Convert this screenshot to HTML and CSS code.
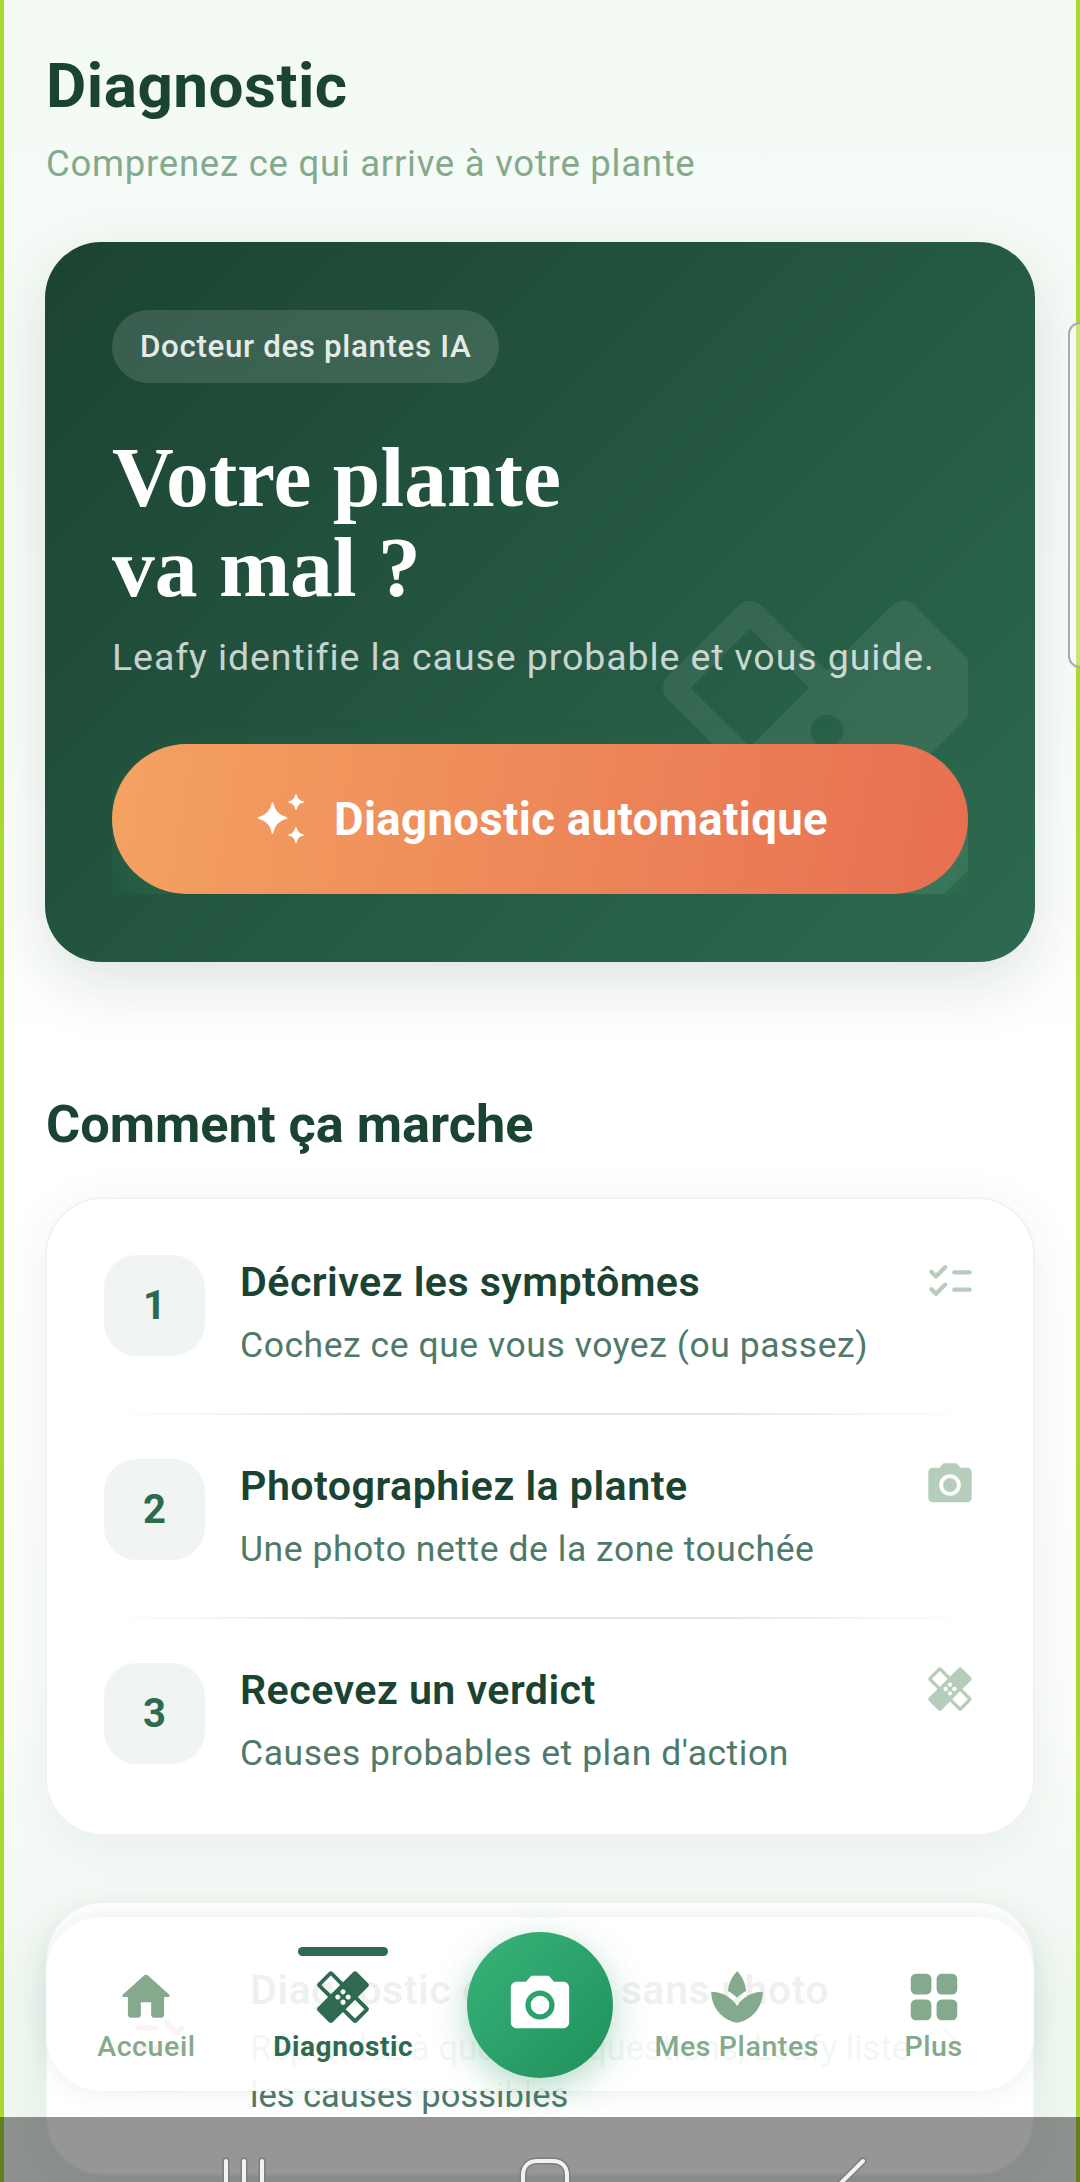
FILE: index.html
```html
<!DOCTYPE html>
<html lang="fr">
<head>
<meta charset="utf-8">
<title>Diagnostic</title>
<link rel="stylesheet" href="styles.css">
</head>
<body>
<svg class="defs" aria-hidden="true">
  <symbol id="i-healing" viewBox="0 0 24 24"><path d="M17.73 12.02l3.98-3.98c.39-.39.39-1.02 0-1.41l-4.34-4.34c-.39-.39-1.02-.39-1.41 0l-3.98 3.98L8 2.29C7.8 2.1 7.55 2 7.29 2c-.25 0-.51.1-.7.29L2.25 6.63c-.39.39-.39 1.02 0 1.41l3.98 3.98L2.25 16c-.39.39-.39 1.02 0 1.41l4.34 4.34c.39.39 1.02.39 1.41 0l3.98-3.98 3.98 3.98c.2.2.45.29.71.29.26 0 .51-.1.71-.29l4.34-4.34c.39-.39.39-1.02 0-1.41l-3.99-3.98zM12 9c.55 0 1 .45 1 1s-.45 1-1 1-1-.45-1-1 .45-1 1-1zm-4.71 1.96L3.66 7.34l3.63-3.63 3.62 3.62-3.62 3.63zM10 13c-.55 0-1-.45-1-1s.45-1 1-1 1 .45 1 1-.45 1-1 1zm2 2c-.55 0-1-.45-1-1s.45-1 1-1 1 .45 1 1-.45 1-1 1zm2-4c.55 0 1 .45 1 1s-.45 1-1 1-1-.45-1-1 .45-1 1-1zm2.66 9.34l-3.63-3.62 3.63-3.63 3.62 3.62-3.62 3.63z"/></symbol>
  <symbol id="i-camera" viewBox="0 0 24 24"><circle cx="12" cy="12" r="3.2"/><path d="M9 2 7.17 4H4c-1.1 0-2 .9-2 2v12c0 1.1.9 2 2 2h16c1.1 0 2-.9 2-2V6c0-1.1-.9-2-2-2h-3.17L15 2H9zm3 15c-2.76 0-5-2.24-5-5s2.24-5 5-5 5 2.24 5 5-2.24 5-5 5z"/></symbol>
  <symbol id="i-checklist" viewBox="0 0 24 24"><rect x="13" y="7" width="9" height="2" rx="1"/><rect x="13" y="15" width="9" height="2" rx="1"/><path d="M5.540 10.900c-.26 0-.51-.1-.71-.29L2.700 8.480c-.39-.39-.39-1.020 0-1.410s1.020-.39 1.410 0l1.430 1.420 3.530-3.540c.39-.39 1.020-.39 1.410 0s.39 1.020 0 1.410l-4.230 4.250c-.2.190-.45.290-.71.290zM5.540 18.900c-.26 0-.51-.1-.71-.29L2.700 16.480c-.39-.39-.39-1.020 0-1.410s1.020-.39 1.410 0l1.430 1.420 3.530-3.540c.39-.39 1.020-.39 1.410 0s.39 1.020 0 1.410l-4.230 4.250c-.2.190-.45.290-.71.290z"/></symbol>
  <symbol id="i-home" viewBox="0 0 24 24"><path d="M10 19v-5h4v5c0 .55.45 1 1 1h3c.55 0 1-.45 1-1v-7h1.700c.46 0 .68-.57.33-.87L12.670 3.600c-.38-.34-.96-.34-1.340 0l-8.360 7.530c-.34.3-.13.87.33.87H5v7c0 .55.45 1 1 1h3c.55 0 1-.45 1-1z"/></symbol>
  <symbol id="i-spa" viewBox="0 0 24 24"><path d="M15.490 9.630c-.18-2.790-1.310-5.510-3.430-7.630-2.140 2.140-3.320 4.860-3.550 7.630 1.280.68 2.460 1.560 3.490 2.630 1.030-1.060 2.210-1.940 3.490-2.630zM12 15.450C9.850 12.170 6.180 10 2 10c0 5.320 3.360 9.820 8.030 11.490.63.23 1.290.4 1.970.51.68-.12 1.330-.29 1.970-.51C18.640 19.820 22 15.320 22 10c-4.180 0-7.850 2.170-10 5.450z"/></symbol>
  <symbol id="i-grid" viewBox="0 0 24 24"><rect x="3" y="3" width="8" height="8" rx="2"/><rect x="13" y="3" width="8" height="8" rx="2"/><rect x="3" y="13" width="8" height="8" rx="2"/><rect x="13" y="13" width="8" height="8" rx="2"/></symbol>
</svg>

<div class="screen">
  <main class="page">
    <header class="head">
      <h1 class="head-title">Diagnostic</h1>
      <p class="head-sub">Comprenez ce qui arrive à votre plante</p>
    </header>

    <section class="hero">
      <div class="hero-inner">
        <svg class="hero-mark"><use href="#i-healing"/></svg>
        <span class="pill">Docteur des plantes IA</span>
        <h2 class="hero-title">Votre plante<br>va mal ?</h2>
        <p class="hero-sub">Leafy identifie la cause probable et vous guide.</p>
        <button class="cta" type="button">
          <svg class="cta-icon" viewBox="0 0 48 50"><path d="M15.500 9c1.400 8 6 13 14 15-8 2-12.600 7-14 15-1.400-8-6-13-14-15 8-2 12.600-7 14-15z"/><path d="M39 1c.7 4 3 6.300 7 7-4 .7-6.300 3-7 7-.7-4-3-6.300-7-7 4-.7 6.300-3 7-7z"/><path d="M39 34c.7 4 3 6.300 7 7-4 .7-6.300 3-7 7-.7-4-3-6.300-7-7 4-.7 6.300-3 7-7z"/></svg>
          <span>Diagnostic automatique</span>
        </button>
      </div>
    </section>

    <h2 class="section-title">Comment ça marche</h2>

    <section class="card steps">
      <div class="step">
        <div class="step-num">1</div>
        <div class="step-text">
          <h3 class="step-title">Décrivez les symptômes</h3>
          <p class="step-sub">Cochez ce que vous voyez (ou passez)</p>
        </div>
        <svg class="step-icon"><use href="#i-checklist"/></svg>
      </div>
      <div class="divider"></div>
      <div class="step">
        <div class="step-num">2</div>
        <div class="step-text">
          <h3 class="step-title">Photographiez la plante</h3>
          <p class="step-sub">Une photo nette de la zone touchée</p>
        </div>
        <svg class="step-icon"><use href="#i-camera"/></svg>
      </div>
      <div class="divider"></div>
      <div class="step">
        <div class="step-num">3</div>
        <div class="step-text">
          <h3 class="step-title">Recevez un verdict</h3>
          <p class="step-sub">Causes probables et plan d'action</p>
        </div>
        <svg class="step-icon"><use href="#i-healing"/></svg>
      </div>
    </section>

    <section class="card manual">
      <div class="manual-icon"><svg class="manual-glyph"><use href="#i-checklist"/></svg></div>
      <div class="manual-text">
        <h3 class="step-title">Diagnostic express sans photo</h3>
        <p class="manual-sub">Répondez à quelques questions, Leafy liste les causes possibles</p>
      </div>
      <svg class="manual-chevron" viewBox="0 0 15 30"><path d="M2 2l11 13L2 28"/></svg>
    </section>
  </main>

  <nav class="nav">
    <a class="nav-item"><svg class="nav-icon"><use href="#i-home"/></svg><span>Accueil</span></a>
    <a class="nav-item is-active"><i class="nav-bar"></i><svg class="nav-icon"><use href="#i-healing"/></svg><span>Diagnostic</span></a>
    <a class="nav-item nav-spacer"></a>
    <a class="nav-item"><svg class="nav-icon"><use href="#i-spa"/></svg><span>Mes Plantes</span></a>
    <a class="nav-item"><svg class="nav-icon"><use href="#i-grid"/></svg><span>Plus</span></a>
  </nav>
  <button class="fab" type="button"><svg class="fab-icon"><use href="#i-camera"/></svg></button>

  <i class="edge edge-left"></i>
  <i class="edge edge-right"></i>
  <i class="edge-handle"></i>

  <div class="sysbar">
    <svg class="sys-icon" viewBox="0 0 52 30"><path class="sys-o" d="M8 4v30M26 4v30M44 4v30"/><path class="sys-w" d="M8 4v30M26 4v30M44 4v30"/></svg>
    <svg class="sys-icon sys-home" viewBox="0 0 60 30"><path class="sys-o" d="M8 40V18C8 9 14 4 22 4h16c8 0 14 5 14 14v22"/><path class="sys-w" d="M8 40V18C8 9 14 4 22 4h16c8 0 14 5 14 14v22"/></svg>
    <svg class="sys-icon" viewBox="0 0 52 30"><path class="sys-o" d="M44 4 12 36"/><path class="sys-w" d="M44 4 12 36"/></svg>
  </div>
</div>
</body>
</html>
```
FILE: styles.css
```css
* { box-sizing: border-box; }
html, body { margin: 0; padding: 0; }
body { font-family: Roboto, "Liberation Sans", sans-serif; color: #1b4332; background: #fff; }
h1, h2, h3, p { margin: 0; font-weight: inherit; }
.defs { position: absolute; width: 0; height: 0; overflow: hidden; }

.screen { position: relative; width: 1080px; height: 2182px; overflow: hidden;
  background: linear-gradient(180deg, #f3faf4 0, #f7fbf8 600px, #fff 1100px, #fbfdfb 1700px, #eff7f1 2000px); }
.page { padding: 0 45px; }

.head { padding: 50px 1px 0; }
.head-title { font-size: 62px; line-height: 72px; font-weight: 700; color: #1b4332; letter-spacing: .5px; }
.head-sub { margin-top: 20px; font-size: 36.500px; line-height: 44px; color: #84a98c; letter-spacing: .75px; }

.hero { margin-top: 56px; height: 720px; padding: 68px 67px 67px; border-radius: 56px;
  background: linear-gradient(135deg, #1b4332 0%, #2d6a4f 100%);
  box-shadow: 0 22px 60px rgba(27, 67, 50, .13); }
.hero-inner { position: relative; height: 584px; overflow: hidden; }
.hero-mark { position: absolute; left: 519px; top: 258px; width: 392px; height: 392px; fill: rgba(255, 255, 255, .07); }
.pill { position: relative; display: inline-flex; align-items: center; height: 73px; padding: 0 28px; border-radius: 37px;
  background: rgba(255, 255, 255, .13); color: #e4ebe7; font-size: 31.300px; font-weight: 500; letter-spacing: .65px; }
.hero-title { position: relative; margin-top: 49px; font-family: "Liberation Serif", serif; font-weight: 700; font-size: 85.500px; line-height: 90px; color: #fff; }
.hero-sub { position: relative; margin-top: 23px; font-size: 37.500px; line-height: 44px; color: rgba(255, 255, 255, .75); letter-spacing: .9px; }
.cta { position: absolute; left: 0; right: 0; bottom: 0; height: 150px; padding: 0 0 0 5px; border: 0; border-radius: 75px; display: flex; align-items: center; justify-content: center; gap: 29px;
  background: linear-gradient(100deg, #f4a261 0%, #e76f51 100%); color: #fff; font-family: inherit; font-size: 45.500px; font-weight: 700; letter-spacing: .35px;
  box-shadow: 0 16px 40px rgba(64, 170, 110, .2); }
.cta-icon { width: 48px; height: 50px; fill: #fff; stroke: #fff; stroke-width: 1.500; stroke-linejoin: round; }

.section-title { margin: 134px 1px 0; font-size: 52.300px; line-height: 56px; font-weight: 700; color: #1b4332; }

.card { background: #fff; border-radius: 56px; box-shadow: 0 0 0 2px #f1f3f2, 0 10px 50px rgba(27, 67, 50, .07); }
.steps { margin: 47px 2px 0; padding: 12px 57px 13px; }
.step { display: flex; align-items: flex-start; padding: 44px 0 48px; }
.step-num { flex: none; width: 101px; height: 101px; border-radius: 33px; background: #f0f4f2; display: flex; align-items: center; justify-content: center;
  font-size: 40px; font-weight: 700; color: #2d6a4f; }
.step-text { flex: 1; margin-left: 35px; padding-top: 1px; min-width: 0; }
.step-title { font-size: 41.200px; line-height: 52px; font-weight: 600; color: #1b4332; letter-spacing: .45px; }
.step-sub { margin-top: 17px; font-size: 35.500px; line-height: 40px; color: #4f7a69; letter-spacing: .55px; }
.step-icon { flex: none; width: 52px; height: 52px; fill: #b6cdbc; }
.divider { height: 2px; background: linear-gradient(90deg, rgba(200, 205, 203, 0), #e4e6e5 30%, #e4e6e5 70%, rgba(200, 205, 203, 0)); }

.manual { margin: 69px 2px 0; padding: 61px 57px 0; height: 271px; display: flex; align-items: flex-start; position: relative; }
.manual-icon { flex: none; width: 113px; height: 109px; margin-top: 19px; border-radius: 36px; background: #fdf6f3; display: flex; align-items: center; justify-content: center; }
.manual-glyph { width: 60px; height: 60px; fill: #d8453a; transform: scaleX(-1); }
.manual-text { flex: 1; margin-left: 33px; min-width: 0; }
.manual-sub { max-width: 680px; margin-top: 9px; font-size: 34.500px; line-height: 47px; color: #4f7a69; letter-spacing: 0; }
.manual-chevron { flex: none; width: 15px; height: 30px; margin: 62px 19px 0 0; fill: none; stroke: #84a98c; stroke-width: 3; stroke-linecap: round; stroke-linejoin: round; }

.nav { position: absolute; left: 46px; top: 1917px; width: 988px; height: 174px; padding: 0 2px; border-radius: 56px;
  display: grid; grid-template-columns: repeat(5, 1fr);
  background: rgba(255, 255, 255, .93); box-shadow: 0 0 28px rgba(27, 67, 50, .09); }
.nav-item { position: relative; display: flex; flex-direction: column; align-items: center; padding-top: 49px; font-size: 28.500px; line-height: 32px; font-weight: 500; color: #84a98c; letter-spacing: .6px; }
.nav-item.is-active { color: #2d6a4f; font-weight: 700; font-size: 28px; }
.nav-icon { width: 62px; height: 62px; fill: #84a98c; margin-bottom: 3px; }
.is-active .nav-icon { fill: #2d6a4f; }
.nav-bar { position: absolute; top: 30px; left: 50%; width: 90px; height: 9px; margin-left: -45px; border-radius: 5px; background: #2d6a4f; }

.fab { position: absolute; left: 467px; top: 1932px; width: 146px; height: 146px; padding: 0; border: 0; border-radius: 50%; display: flex; align-items: center; justify-content: center;
  background: linear-gradient(135deg, #38b47a 0%, #1f8f5c 100%); box-shadow: 0 10px 34px rgba(40, 150, 100, .35); }
.fab-icon { width: 70px; height: 70px; fill: #fff; }

.edge { position: absolute; top: 0; bottom: 0; width: 4px; background: #a9d92e; }
.edge-left { left: 0; }
.edge-right { right: 0; }
.edge-handle { position: absolute; right: -12px; top: 322px; width: 24px; height: 346px; border: 2px solid #aaa; border-radius: 12px; background: rgba(255, 255, 255, .35); }

.sysbar { position: absolute; left: 0; right: 0; bottom: 0; height: 65px; padding: 40px 209px 0 218px; background: rgba(0, 0, 0, .41); display: flex; justify-content: space-between; overflow: hidden; }
.sys-icon { flex: none; width: 52px; height: 30px; overflow: visible; fill: none; stroke-linecap: round; }
.sys-home { width: 60px; }
.sys-o { stroke: #7e7e7e; stroke-width: 7; }
.sys-w { stroke: #f2f2f2; stroke-width: 4; }
```
